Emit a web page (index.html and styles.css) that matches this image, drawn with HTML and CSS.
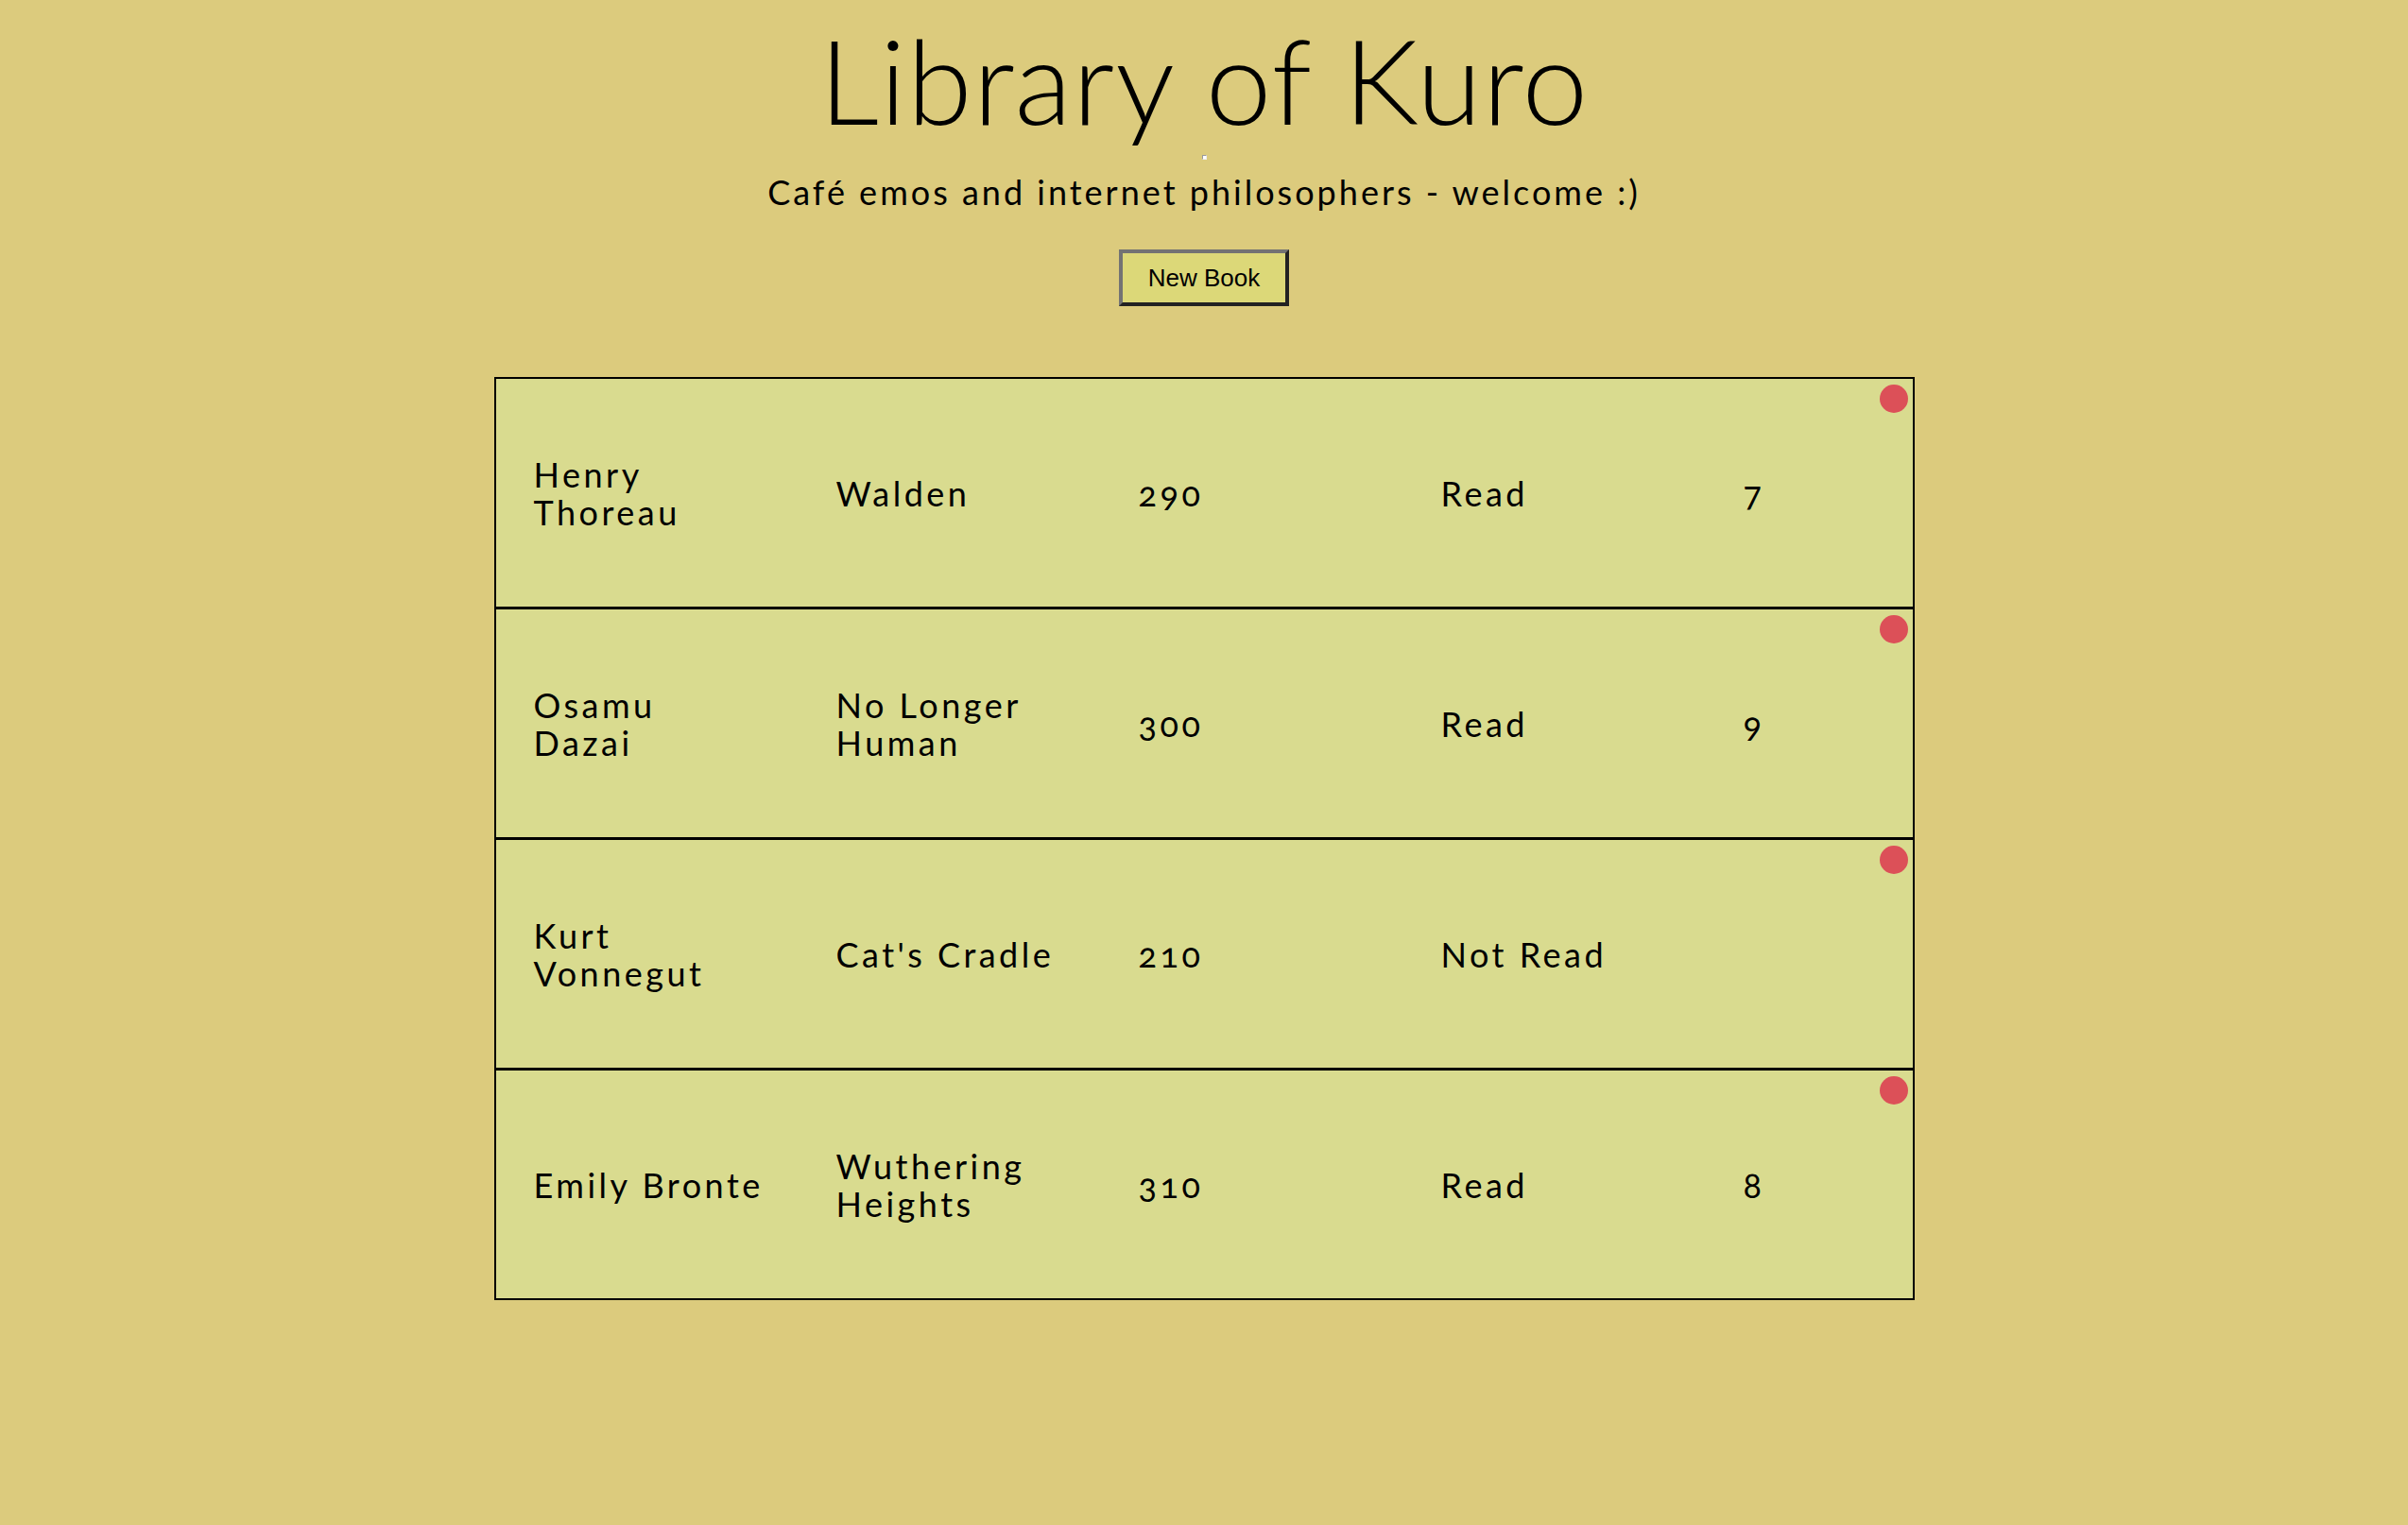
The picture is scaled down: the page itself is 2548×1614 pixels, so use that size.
FILE: index.html
```html
<!DOCTYPE html>
<html lang="en">
<head>
<meta charset="utf-8">
<title>Library of Kuro</title>
<link rel="stylesheet" href="styles.css">
</head>
<body>
<header class="header">
  <h1 class="title">Library of Kuro</h1>
  <div class="broken-img"></div>
  <p class="subtitle">Café emos and internet philosophers - welcome :)</p>
  <button class="new-book" type="button">New Book</button>
</header>
<main class="library">
  <div class="book">
    <div class="cell">Henry Thoreau</div>
    <div class="cell">Walden</div>
    <div class="cell num">290</div>
    <div class="cell">Read</div>
    <div class="cell num">7</div>
    <span class="remove"></span>
  </div>
  <div class="book">
    <div class="cell">Osamu Dazai</div>
    <div class="cell">No Longer Human</div>
    <div class="cell num">300</div>
    <div class="cell">Read</div>
    <div class="cell num">9</div>
    <span class="remove"></span>
  </div>
  <div class="book">
    <div class="cell">Kurt Vonnegut</div>
    <div class="cell">Cat's Cradle</div>
    <div class="cell num">210</div>
    <div class="cell">Not Read</div>
    <div class="cell num"></div>
    <span class="remove"></span>
  </div>
  <div class="book">
    <div class="cell">Emily Bronte</div>
    <div class="cell">Wuthering Heights</div>
    <div class="cell num">310</div>
    <div class="cell">Read</div>
    <div class="cell num">8</div>
    <span class="remove"></span>
  </div>
</main>
</body>
</html>
```
FILE: styles.css
```css
html, body {
  margin: 0;
  padding: 0;
}
body {
  background: #dccb7d;
  color: #000;
  font-family: Lato, "Open Sans", sans-serif;
}
.header {
  display: flex;
  flex-direction: column;
  align-items: center;
  padding-top: 9px;
}
.title {
  margin: 0;
  font-size: 125px;
  line-height: 150px;
  font-weight: 300;
  letter-spacing: 1px;
}
.broken-img {
  width: 3px;
  height: 3px;
  margin-top: 5px;
  border: 1px solid #999;
  border-right-color: #eee;
  border-bottom-color: #eee;
  background: #fff;
}
.subtitle {
  margin: 14px 0 0;
  font-size: 36px;
  line-height: 40px;
  font-weight: 400;
  letter-spacing: 3px;
}
.new-book {
  margin-top: 41px;
  width: 180px;
  height: 60px;
  padding: 0;
  background: #dcd878;
  border: 4px solid;
  border-color: #737373 #222 #222 #737373;
  font-family: "Liberation Sans", Arial, sans-serif;
  font-size: 26px;
  color: #000;
}
.library {
  width: 1503px;
  margin: 75px auto 0;
}
.book {
  position: relative;
  box-sizing: border-box;
  height: 245px;
  display: grid;
  grid-template-columns: repeat(4, 245px) auto;
  column-gap: 75px;
  align-items: center;
  padding-left: 40px;
  background: #d9db8f;
  border: 2px solid #000;
}
.book + .book {
  margin-top: -1px;
}
.cell {
  font-size: 36px;
  line-height: 40px;
  letter-spacing: 3.5px;
}
.num {
  font-feature-settings: "onum";
}
.remove {
  position: absolute;
  top: 6px;
  right: 5px;
  width: 30px;
  height: 30px;
  border-radius: 50%;
  background: #dc5058;
}
```
